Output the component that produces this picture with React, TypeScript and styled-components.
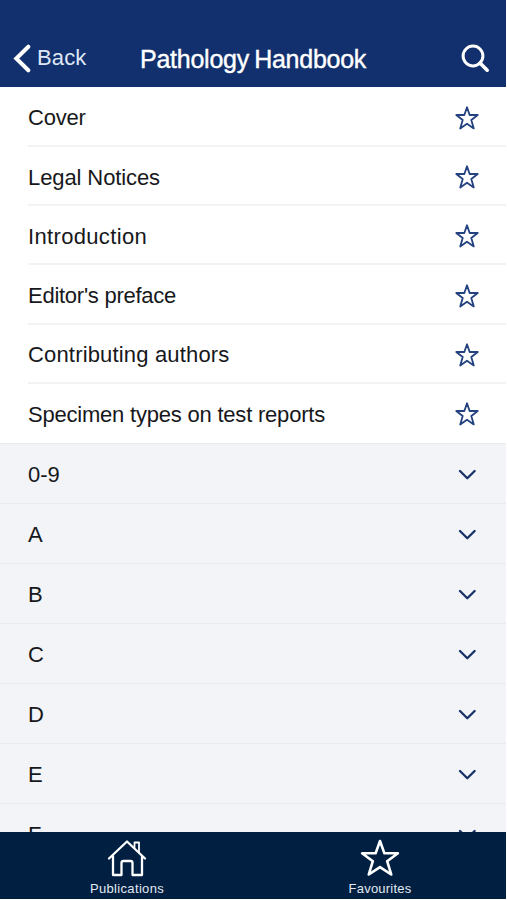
import React from "react";
import styled, { createGlobalStyle } from "styled-components";

const GlobalStyle = createGlobalStyle`
  * { box-sizing: border-box; }
  body { margin: 0; background: #fff; }
  button { border: 0; padding: 0; background: none; color: inherit; font: inherit; }
`;

const Screen = styled.main`
  display: flex;
  flex-direction: column;
  width: 506px;
  height: 899px;
  overflow: hidden;
  background: #fff;
  font-family: "Liberation Sans", Arial, sans-serif;
  color: #17181b;
`;

const Header = styled.header`
  flex: 0 0 87px;
  display: grid;
  grid-template-columns: 127px 1fr 100px;
  align-items: center;
  padding: 29px 16px 0 13px;
  background: #12306d;
  color: #fff;
`;

const BackButton = styled.button`
  display: flex;
  align-items: center;
  gap: 6px;
  font-size: 22px !important;
  line-height: 28px;
  letter-spacing: 0.15px;
  color: #dfe7f7 !important;
`;

const Title = styled.h1`
  margin: 0;
  padding-top: 1px;
  font-size: 25px;
  line-height: 28px;
  font-weight: 400;
  letter-spacing: -0.25px;
  word-spacing: -1.5px;
  white-space: nowrap;
  -webkit-text-stroke: 0.4px #fff;
`;

const SearchButton = styled.button`
  display: flex;
  justify-content: flex-end;
`;

const List = styled.div`
  flex: 1 1 0;
  min-height: 0;
  overflow: hidden;
`;

const PageList = styled.div`
  height: 356px;
  padding-top: 0.6px;
  overflow: hidden;
`;

const Row = styled.div`
  display: flex;
  align-items: center;
  justify-content: space-between;
  height: 59.3px;
  margin-left: 28px;
  padding: 3px 27px 0 0;
  border-bottom: 2px solid #f1f3f4;
  &:last-child { border-bottom-color: transparent; }
`;

const Section = styled.div`
  display: flex;
  align-items: center;
  justify-content: space-between;
  height: 60px;
  padding: 2px 30px 0 28px;
  background: #f2f4f8;
  border-top: 1px solid #e7ebef;
`;

const Label = styled.span<{ $spacing?: number }>`
  padding-top: 1px;
  font-size: 22px;
  line-height: 28px;
  letter-spacing: ${({ $spacing = 0 }) => $spacing}px;
  white-space: nowrap;
`;

const TabBar = styled.nav`
  flex: 0 0 67px;
  display: grid;
  grid-template-columns: 1fr 1fr;
  background: #001f41;
  color: #fff;
`;

const Tab = styled.button`
  display: flex;
  flex-direction: column;
  align-items: center;
  padding: 7px 0 0 1px !important;
`;

const TabLabel = styled.span<{ $spacing: number }>`
  margin-top: 4px;
  font-size: 13px;
  line-height: 16px;
  letter-spacing: ${({ $spacing }) => $spacing}px;
  color: #e3e9f2;
`;

const Star = ({ width, height, stroke }: { width: number; height: number; stroke: number }) => (
  <svg width={width} height={height} viewBox="0 0 38 38" preserveAspectRatio="none" fill="none" stroke="currentColor" strokeWidth={stroke} strokeLinejoin="round">
    <path d="M19 2 23.2 14.3H36L25.8 22.2 29.7 35.5 19 28.1 8.3 35.5 12.2 22.2 2 14.3H14.8Z" />
  </svg>
);

const StarButton = styled.button`
  display: flex;
  color: #24427f !important;
`;

const Chevron = () => (
  <svg width="18" height="12" viewBox="0 0 18 12" fill="none" stroke="#183268" strokeWidth="2.3" strokeLinecap="round" strokeLinejoin="round">
    <path d="m2 2 7.3 7.3L16.6 2" />
  </svg>
);

const pages = [
  { name: "Cover", spacing: -0.2 },
  { name: "Legal Notices", spacing: -0.1 },
  { name: "Introduction", spacing: 0.34 },
  { name: "Editor's preface", spacing: -0.26 },
  { name: "Contributing authors", spacing: 0.17 },
  { name: "Specimen types on test reports", spacing: -0.21 },
];

const sections = ["0-9", "A", "B", "C", "D", "E", "F"];

export default function App() {
  return (
    <>
      <GlobalStyle />
      <Screen>
        <Header>
          <BackButton>
            <svg width="18" height="29" viewBox="0 0 18 29" fill="none" stroke="#fff" strokeWidth="4" strokeLinecap="round">
              <path d="M15.3 2.7 3.3 14.5l12 11.8" />
            </svg>
            Back
          </BackButton>
          <Title>Pathology Handbook</Title>
          <SearchButton aria-label="Search">
            <svg width="29" height="29" viewBox="0 0 29 29" fill="none" stroke="#fff" strokeWidth="3">
              <circle cx="12" cy="12" r="9.9" />
              <path d="m19 19 7.2 7.2" strokeWidth="3.6" strokeLinecap="round" />
            </svg>
          </SearchButton>
        </Header>
        <List>
          <PageList>
            {pages.map(({ name, spacing }) => (
              <Row key={name}>
                <Label $spacing={spacing}>{name}</Label>
                <StarButton aria-label={`Favourite ${name}`}>
                  <Star width={24} height={24} stroke={2.9} />
                </StarButton>
              </Row>
            ))}
          </PageList>
          {sections.map((name) => (
            <Section key={name}>
              <Label>{name}</Label>
              <Chevron />
            </Section>
          ))}
        </List>
        <TabBar>
          <Tab>
            <svg width="40" height="38" viewBox="0 0 40 38" fill="none" stroke="#fff" strokeWidth="2.3" strokeLinejoin="round" strokeLinecap="round">
              <path d="M2 19.5 20 2.5l18 17M6 17v19h8.5V24q0-2 2-2h7q2 0 2 2v12H35V17" />
              <path d="M27.5 9V3.5h4.5v10" strokeWidth="1.8" />
            </svg>
            <TabLabel $spacing={0.34}>Publications</TabLabel>
          </Tab>
          <Tab>
            <Star width={40} height={38} stroke={2.5} />
            <TabLabel $spacing={0.22}>Favourites</TabLabel>
          </Tab>
        </TabBar>
      </Screen>
    </>
  );
}
